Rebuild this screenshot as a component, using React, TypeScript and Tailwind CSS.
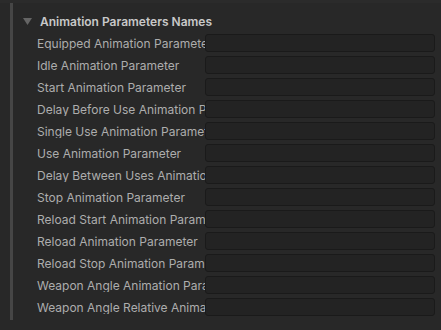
const params = [
  "Equipped Animation Parameter",
  "Idle Animation Parameter",
  "Start Animation Parameter",
  "Delay Before Use Animation Parameter",
  "Single Use Animation Parameter",
  "Use Animation Parameter",
  "Delay Between Uses Animation Parameter",
  "Stop Animation Parameter",
  "Reload Start Animation Parameter",
  "Reload Animation Parameter",
  "Reload Stop Animation Parameter",
  "Weapon Angle Animation Parameter",
  "Weapon Angle Relative Animation Parameter",
]

export default function App() {
  return (
    <div
      className="w-[441px] h-[330px] bg-[#282828] overflow-hidden flex flex-col"
      style={{ fontFamily: "Inter, 'Noto Sans', sans-serif" }}
    >
      <div className="h-[3px] bg-[#2b2b2b]" />
      <div className="flex flex-1">
        {/* left indent bar */}
        <div className="ml-[10px] w-[3px] h-[317px] bg-[#464646]" />

        <div className="flex-1 flex flex-col">
          {/* foldout header */}
          <div className="h-[31px] flex items-center pt-[6px]">
            <svg width="9" height="8" viewBox="0 0 9 8" className="ml-[10px] mr-[8px]">
              <path d="M0 0 H9 L4.5 7 Z" fill="#656565" />
            </svg>
            <span className="text-[12px] font-semibold text-[#c8c8c8] leading-none">
              Animation Parameters Names
            </span>
          </div>

          {/* fields */}
          <div className="flex flex-col gap-[4px]">
            {params.map((p) => (
              <div key={p} className="flex items-center h-[18px]">
                <div className="w-[192px] pl-[24px] pt-[1px] overflow-hidden whitespace-nowrap text-[12px] text-[#adadad] leading-none">
                  {p}
                </div>
                <div className="w-[230px] h-[18px] bg-[#232323] border border-[#1a1a1a] rounded-[3px]" />
              </div>
            ))}
          </div>
        </div>
      </div>
    </div>
  )
}
